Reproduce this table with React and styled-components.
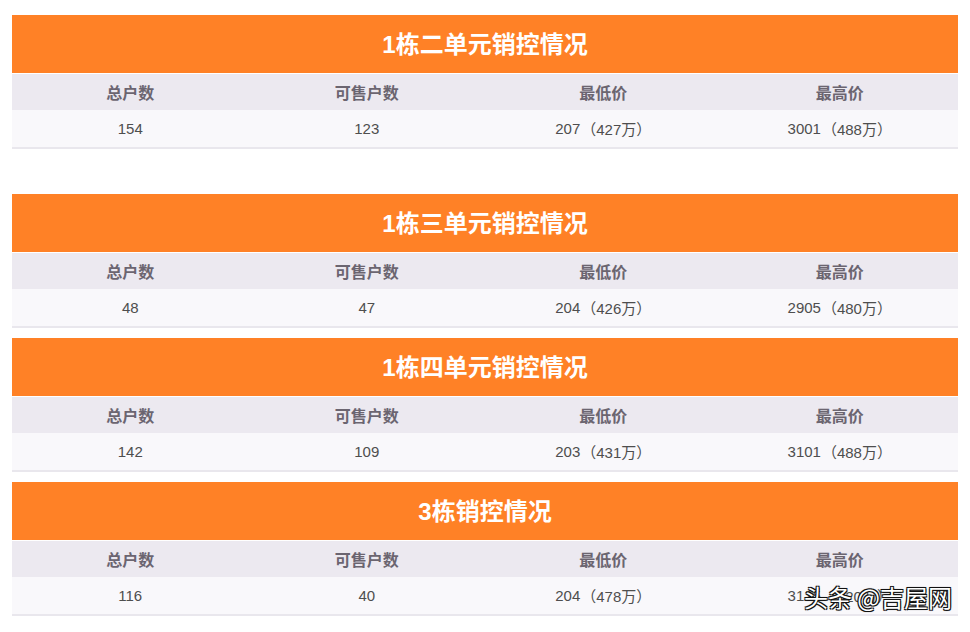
import React from 'react'
import styled, { createGlobalStyle } from 'styled-components'

const Global = createGlobalStyle`
  body {
    margin: 0;
    background: #ffffff;
    font-family: "Liberation Sans", Arial, "Noto Sans CJK SC", sans-serif;
  }
`

const Page = styled.div`
  position: relative;
  padding: 15px 12px 0 12px;
  width: 946px;
`

const Block = styled.div`
  margin-bottom: ${p => p.after}px;
`

const Title = styled.div`
  height: 58px;
  padding-bottom: 3px;
  box-sizing: border-box;
  background: #ff8126;
  color: #ffffff;
  font-size: 24px;
  font-weight: bold;
  display: flex;
  align-items: center;
  justify-content: center;
  margin-bottom: 1px;
`

const Row = styled.div`
  display: grid;
  grid-template-columns: repeat(4, 1fr);
  height: ${p => p.h}px;
  background: ${p => p.bg};
  border-bottom: ${p => p.line ? '2px solid #e9e7ed' : 'none'};
`

const Cell = styled.div`
  display: flex;
  align-items: center;
  justify-content: center;
  padding-bottom: ${p => p.head ? 1 : 0}px;
  font-size: ${p => p.head ? 16 : 15}px;
  font-weight: ${p => p.head ? 'bold' : 'normal'};
  color: ${p => p.head ? '#6b6570' : '#4e4e4e'};
`

const Paren = styled.span`
  margin-left: 1px;
`

const Watermark = styled.div`
  position: absolute;
  right: 18px;
  top: 579px;
  font-size: 24px;
  color: #ffffff;
  font-family: "Noto Sans CJK SC", sans-serif;
  text-shadow: -1px -1px 0 #111, 1px -1px 0 #111, -1px 1px 0 #111, 1px 1px 0 #111, 0 0 2px #000;
`

const heads = ['总户数', '可售户数', '最低价', '最高价']

const data = [
  { title: '1栋二单元销控情况', vals: ['154', '123', ['207', '（427万）'], ['3001', '（488万）']], after: 45 },
  { title: '1栋三单元销控情况', vals: ['48', '47', ['204', '（426万）'], ['2905', '（480万）']], after: 10 },
  { title: '1栋四单元销控情况', vals: ['142', '109', ['203', '（431万）'], ['3101', '（488万）']], after: 10 },
  { title: '3栋销控情况', vals: ['116', '40', ['204', '（478万）'], ['3125', '（520万）']], after: 0 },
]

const App = () => (
  <>
    <Global />
    <Page>
      {data.map(b => (
        <Block key={b.title} after={b.after}>
          <Title>{b.title}</Title>
          <Row h={36} bg="#ece9f0">
            {heads.map(h => <Cell head key={h}>{h}</Cell>)}
          </Row>
          <Row h={37} bg="#f9f8fb" line>
            {b.vals.map((v, i) => (
              <Cell key={i}>
                {Array.isArray(v) ? <>{v[0]}<Paren>{v[1]}</Paren></> : v}
              </Cell>
            ))}
          </Row>
        </Block>
      ))}
      <Watermark>头条 @吉屋网</Watermark>
    </Page>
  </>
)

export default App
